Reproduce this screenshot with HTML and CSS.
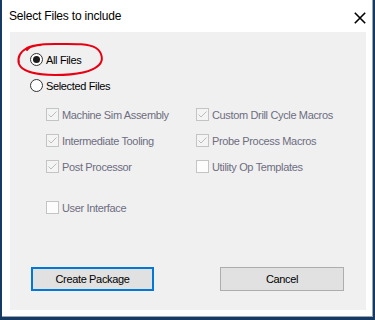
FILE: index.html
```html
<!DOCTYPE html>
<html>
<head>
<meta charset="utf-8">
<link rel="stylesheet" href="styles.css">
</head>
<body>
<div class="window">
  <div class="titlebar">
    <span class="title">Select Files to include</span>
    <svg class="close" width="12" height="12" viewBox="0 0 12 12"><path d="M0.8 0.8 L11.2 11.2 M11.2 0.8 L0.8 11.2" stroke="#000" stroke-width="1.6" fill="none"/></svg>
  </div>
  <div class="content">
    <div class="radio-row">
      <span class="radio checked"></span><span class="label">All Files</span>
    </div>
    <div class="radio-row">
      <span class="radio"></span><span class="label">Selected Files</span>
    </div>
    <div class="grid">
      <div class="check-row"><span class="box checked"><svg width="11" height="11" viewBox="0 0 11 11"><path d="M1.5 5.5 L4 8 L9.5 2.5" stroke="#bcbcbc" stroke-width="1" fill="none"/></svg></span><span class="dim">Machine Sim Assembly</span></div>
      <div class="check-row"><span class="box checked"><svg width="11" height="11" viewBox="0 0 11 11"><path d="M1.5 5.5 L4 8 L9.5 2.5" stroke="#bcbcbc" stroke-width="1" fill="none"/></svg></span><span class="dim">Custom Drill Cycle Macros</span></div>
      <div class="check-row"><span class="box checked"><svg width="11" height="11" viewBox="0 0 11 11"><path d="M1.5 5.5 L4 8 L9.5 2.5" stroke="#bcbcbc" stroke-width="1" fill="none"/></svg></span><span class="dim">Intermediate Tooling</span></div>
      <div class="check-row"><span class="box checked"><svg width="11" height="11" viewBox="0 0 11 11"><path d="M1.5 5.5 L4 8 L9.5 2.5" stroke="#bcbcbc" stroke-width="1" fill="none"/></svg></span><span class="dim">Probe Process Macros</span></div>
      <div class="check-row"><span class="box checked"><svg width="11" height="11" viewBox="0 0 11 11"><path d="M1.5 5.5 L4 8 L9.5 2.5" stroke="#bcbcbc" stroke-width="1" fill="none"/></svg></span><span class="dim">Post Processor</span></div>
      <div class="check-row"><span class="box"></span><span class="dim">Utility Op Templates</span></div>
    </div>
    <div class="check-row single"><span class="box"></span><span class="dim">User Interface</span></div>
    <div class="buttons">
      <div class="btn default">Create Package</div>
      <div class="btn">Cancel</div>
    </div>
  </div>
  <svg class="annot" width="375" height="320" viewBox="0 0 375 320"><path d="M27 50 C30 45, 40 44, 55 44 C70 44, 88 43, 96 48 C102 52, 104 60, 99 65 C92 72, 75 75, 55 75 C38 75, 22 72, 19 64 C17 57, 20 52, 27 48 C31 46, 36 45, 41 45" stroke="#e60012" stroke-width="2" fill="none" stroke-linecap="round"/></svg>
</div>
</body>
</html>
```
FILE: styles.css
```css
html, body {
  margin: 0;
  padding: 0;
}
body {
  width: 375px;
  height: 320px;
  background: #173a63;
  overflow: hidden;
  font-family: "Liberation Sans", Arial, sans-serif;
  font-size: 11px;
  letter-spacing: -0.35px;
  white-space: nowrap;
}
.window {
  position: relative;
  margin-left: 2px;
  width: 370px;
  height: 316px;
  background: #ffffff;
  border-right: 1px solid #9aa4b0;
  border-bottom: 1px solid #9aa4b0;
  display: flex;
  flex-direction: column;
}
.titlebar {
  height: 32px;
  flex: none;
  display: flex;
  align-items: center;
  padding-left: 7px;
  padding-right: 6px;
  box-sizing: border-box;
}
.title {
  color: #000;
  font-size: 12px;
  letter-spacing: -0.2px;
  flex: 1;
  margin-top: -1px;
}
.close {
  display: block;
  margin-top: 4px;
}
.content {
  margin-left: 8px;
  margin-right: 6px;
  height: 278px;
  background: #f0f0f0;
  padding: 21px 0 0 20px;
  box-sizing: border-box;
  display: flex;
  flex-direction: column;
}
.radio-row {
  height: 13px;
  display: flex;
  align-items: center;
  margin-bottom: 13px;
}
.radio {
  width: 13px;
  height: 13px;
  box-sizing: border-box;
  border: 1px solid #333;
  border-radius: 50%;
  background: #fff;
  display: flex;
  align-items: center;
  justify-content: center;
  flex: none;
}
.radio.checked::after {
  content: "";
  width: 7px;
  height: 7px;
  border-radius: 50%;
  background: #1a1a1a;
}
.label {
  color: #000;
  margin-left: 3px;
}
.grid {
  margin-top: 3px;
  margin-left: 16px;
  display: grid;
  grid-template-columns: 150px 150px;
  row-gap: 13px;
}
.check-row {
  height: 13px;
  display: flex;
  align-items: center;
}
.check-row.single {
  margin-top: 28px;
  margin-left: 16px;
}
.box {
  width: 13px;
  height: 13px;
  box-sizing: border-box;
  border: 1px solid #c4c4c4;
  background: #fcfcfc;
  flex: none;
  display: flex;
  align-items: center;
  justify-content: center;
}
.box.checked {
  background: #f4f4f4;
}
.box svg {
  display: block;
}
.dim {
  color: #6d6d80;
  margin-left: 3px;
}
.buttons {
  margin-top: 53px;
  margin-left: 1px;
  display: flex;
  gap: 66px;
}
.btn {
  width: 123px;
  height: 24px;
  box-sizing: border-box;
  background: #e1e1e1;
  border: 1px solid #adadad;
  display: flex;
  align-items: center;
  justify-content: center;
  color: #000;
  padding-bottom: 1px;
}
.btn.default {
  border: 2px solid #0078d7;
}
.btn:last-child {
  width: 124px;
}
.annot {
  position: absolute;
  left: -2px;
  top: 0;
  pointer-events: none;
}
```
